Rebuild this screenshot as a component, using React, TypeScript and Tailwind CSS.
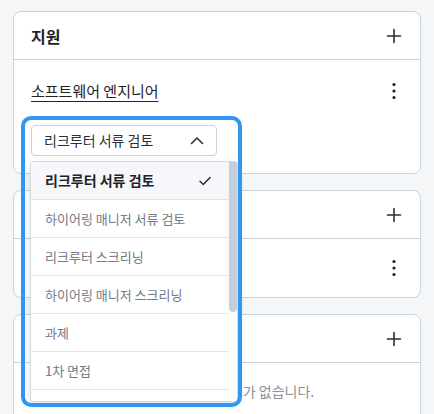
import React from "react";

const font = { fontFamily: '"Noto Sans CJK KR", "Noto Sans", sans-serif' };

const PlusIcon = () => (
  <svg width="16" height="16" viewBox="0 0 16 16" fill="none" stroke="#2b2f36" strokeWidth="1.6" strokeLinecap="round">
    <path d="M8 1.5v13M1.5 8h13" />
  </svg>
);

const KebabIcon = () => (
  <svg width="6" height="18" viewBox="0 0 6 18" fill="#1f2329">
    <circle cx="3" cy="2.5" r="1.6" />
    <circle cx="3" cy="9" r="1.6" />
    <circle cx="3" cy="15.5" r="1.6" />
  </svg>
);

const options = [
  "리크루터 서류 검토",
  "하이어링 매니저 서류 검토",
  "리크루터 스크리닝",
  "하이어링 매니저 스크리닝",
  "과제",
  "1차 면접",
  "2차 면접",
];

const CardHeader = ({ title }: { title: string }) => (
  <div className="flex h-[48px] items-center justify-between border-b border-[#c9d3de] pl-[17px] pr-[18px]">
    <span className="text-[16px] font-bold text-[#1f2329]">{title}</span>
    <PlusIcon />
  </div>
);

const StageSelect = () => (
  <div className="relative h-[31px] w-[186px]">
    {/* trigger */}
    <div className="flex h-full items-center justify-between rounded-[4px] border border-[#c9d3de] bg-white pl-[12px] pr-[12px]">
      <span className="text-[14px] text-[#2b2f36]">리크루터 서류 검토</span>
      <svg width="14" height="9" viewBox="0 0 14 9" fill="none" stroke="#2b2f36" strokeWidth="1.6" strokeLinecap="round" strokeLinejoin="round">
        <path d="M1.5 7.5L7 2l5.5 5.5" />
      </svg>
    </div>

    {/* focus ring */}
    <div className="pointer-events-none absolute left-[-10px] top-[-9px] z-20 h-[291px] w-[221px] rounded-[10px] border-4 border-[#2f97ef]" />

    {/* menu */}
    <div className="absolute left-[-1px] top-[36px] z-10 flex h-[241px] w-[208px] overflow-hidden rounded-[3px] border border-[#d3dbe4] bg-white shadow-[0_3px_8px_rgba(0,0,0,0.12)]">
      <div className="flex w-[199px] flex-col">
        {options.map((o, i) => (
          <div
            key={o}
            className={
              i === 0
                ? "flex h-[38px] shrink-0 items-center justify-between border-b border-[#dde4ec] bg-[#f5f7fa] pl-[14px] pr-[18px]"
                : "flex h-[38px] shrink-0 items-center border-b border-[#dde4ec] pl-[14px]"
            }
          >
            <span className={i === 0 ? "text-[14px] font-bold text-[#1f2329]" : "text-[13px] text-[#737b86]"}>{o}</span>
            {i === 0 && (
              <svg width="12" height="10" viewBox="0 0 12 10" fill="none" stroke="#2b2f36" strokeWidth="1.5" strokeLinecap="round" strokeLinejoin="round">
                <path d="M1 5.2l3.3 3.3L11 1.5" />
              </svg>
            )}
          </div>
        ))}
      </div>
      <div className="w-[8px] shrink-0">
        <div className="h-[150px] rounded-b-[4px] bg-[#c5cfd9]" />
      </div>
    </div>
  </div>
);

export default function App() {
  return (
    <div className="min-h-screen bg-[#f5f6f8] px-[13px] pt-[11px]" style={font}>
      <div className="flex flex-col gap-4">
        {/* card 1 */}
        <div className="rounded-[8px] border border-[#c9d3de] bg-white">
          <CardHeader title="지원" />
          <div className="px-[17px] pb-[17px] pt-[19px]">
            <div className="flex h-[24px] items-center justify-between pr-[1px]">
              <span className="text-[15px] text-[#1f2329] underline underline-offset-[4px]">소프트웨어 엔지니어</span>
              <div className="flex w-[16px] justify-center"><KebabIcon /></div>
            </div>
            <div className="mt-[22px]">
              <StageSelect />
            </div>
          </div>
        </div>

        {/* card 2 */}
        <div className="rounded-[8px] border border-[#c9d3de] bg-white">
          <CardHeader title="인터뷰" />
          <div className="flex h-[58px] items-center justify-between pl-[17px] pr-[18px]">
            <span className="text-[15px] text-[#1f2329] underline">프로덕트 디자이너</span>
            <div className="flex w-[16px] justify-center"><KebabIcon /></div>
          </div>
        </div>

        {/* card 3 */}
        <div className="rounded-[8px] border border-[#c9d3de] bg-white">
          <CardHeader title="평가" />
          <div className="pb-[20px] pl-[23px] pr-[17px] pt-[17px] leading-[20px]">
            <span className="text-[14px] text-[#8a919b]">아직 작성된 인터뷰 스코어카드 검토가 없습니다.</span>
          </div>
        </div>
      </div>
    </div>
  );
}
